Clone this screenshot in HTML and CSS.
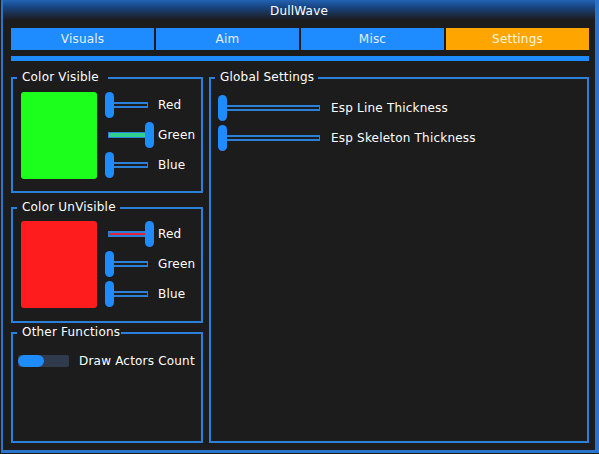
FILE: index.html
```html
<!DOCTYPE html>
<html>
<head>
<meta charset="utf-8">
<title>DullWave</title>
<link rel="stylesheet" href="styles.css">
</head>
<body>
<div class="window">
  <div class="titlebar">DullWave</div>
  <div class="content">
    <nav class="tabs">
      <div class="tab">Visuals</div>
      <div class="tab">Aim</div>
      <div class="tab">Misc</div>
      <div class="tab tab-active">Settings</div>
    </nav>
    <div class="separator"></div>
    <div class="main">
      <div class="col-left">
        <fieldset class="group group-visible">
          <legend class="lg-visible">Color Visible</legend>
          <div class="color-row">
            <div class="swatch swatch-green"></div>
            <div class="sliders">
              <div class="slider-row">
                <div class="slider"><div class="track"></div><div class="knob"></div></div>
                <span class="label">Red</span>
              </div>
              <div class="slider-row">
                <div class="slider"><div class="track track-green"></div><div class="knob knob-end"></div></div>
                <span class="label">Green</span>
              </div>
              <div class="slider-row">
                <div class="slider"><div class="track"></div><div class="knob"></div></div>
                <span class="label">Blue</span>
              </div>
            </div>
          </div>
        </fieldset>
        <fieldset class="group group-unvisible">
          <legend class="lg-unvisible">Color UnVisible</legend>
          <div class="color-row">
            <div class="swatch swatch-red"></div>
            <div class="sliders">
              <div class="slider-row">
                <div class="slider"><div class="track track-red"></div><div class="knob knob-end"></div></div>
                <span class="label">Red</span>
              </div>
              <div class="slider-row">
                <div class="slider"><div class="track"></div><div class="knob"></div></div>
                <span class="label">Green</span>
              </div>
              <div class="slider-row">
                <div class="slider"><div class="track"></div><div class="knob"></div></div>
                <span class="label">Blue</span>
              </div>
            </div>
          </div>
        </fieldset>
        <fieldset class="group group-other">
          <legend class="lg-other">Other Functions</legend>
          <div class="toggle-row">
            <div class="toggle"><div class="toggle-knob"></div></div>
            <span class="toggle-label">Draw Actors Count</span>
          </div>
        </fieldset>
      </div>
      <fieldset class="group group-global">
        <legend class="lg-global">Global Settings</legend>
        <div class="global-list">
          <div class="slider-row">
            <div class="slider slider-wide"><div class="track"></div><div class="knob"></div></div>
            <span class="label label-wide">Esp Line Thickness</span>
          </div>
          <div class="slider-row">
            <div class="slider slider-wide"><div class="track"></div><div class="knob"></div></div>
            <span class="label label-wide">Esp Skeleton Thickness</span>
          </div>
        </div>
      </fieldset>
    </div>
  </div>
</div>
</body>
</html>
```

FILE: styles.css
```css
html, body {
  margin: 0;
  padding: 0;
  background: #1c1c1c;
}

body {
  font-family: "DejaVu Sans", "Liberation Sans", sans-serif;
  font-size: 12px;
  letter-spacing: 0.2px;
  color: #ffffff;
}

.window {
  box-sizing: border-box;
  margin-left: 1px;
  width: 598px;
  height: 453px;
  border-left: 2px solid #2a74cc;
  border-right: 4px solid #2a74cc;
  border-bottom: 3px solid #2a74cc;
  background: #1c1c1c;
  display: flex;
  flex-direction: column;
}

.titlebar {
  height: 20px;
  line-height: 22px;
  text-align: center;
  color: #ffffff;
  background: linear-gradient(to bottom, #2163b3 0%, #184482 35%, #1c1c1c 100%);
}

.content {
  padding: 8px 6px 0 8px;
  display: flex;
  flex-direction: column;
}

.tabs {
  display: grid;
  grid-template-columns: repeat(4, 1fr);
  column-gap: 2px;
  height: 22px;
}

.tab {
  background: #1e8cff;
  color: #e6eef8;
  text-align: center;
  line-height: 22px;
}

.tab-active {
  background: #ffa500;
  color: #fff6e0;
}

.separator {
  margin-top: 6px;
  height: 5px;
  background: #1e8cff;
}

.main {
  margin-top: 10px;
  height: 372px;
  display: grid;
  grid-template-columns: 192px 380px;
  column-gap: 6px;
}

.col-left {
  display: flex;
  flex-direction: column;
}

.group {
  box-sizing: border-box;
  margin: 0;
  min-width: 0;
  border: 2px solid #2b80d9;
  padding: 0 0 0 4px;
}

.group legend {
  box-sizing: border-box;
  position: relative;
  top: -1px;
  padding: 0 0 0 5px;
  line-height: 14px;
  color: #ffffff;
  white-space: nowrap;
}

.lg-visible { width: 91px; }
.lg-unvisible { width: 103px; }
.lg-other { width: 104px; }
.lg-global { width: 103px; }

.group-visible {
  height: 122px;
  padding-top: 7px;
}

.group-unvisible {
  height: 122px;
  margin-top: 8px;
  padding-top: 6px;
}

.group-other {
  flex: 1;
  margin-top: 3px;
  padding-top: 14px;
}

.group-global {
  height: 372px;
  padding-top: 10px;
}

.color-row {
  display: flex;
  align-items: flex-start;
  gap: 8px;
  padding-left: 4px;
}

.swatch {
  width: 76px;
  height: 87px;
  border-radius: 3px;
}

.swatch-green { background: #1cff1c; }
.swatch-red { background: #ff1c1c; }

.sliders {
  display: flex;
  flex-direction: column;
  gap: 4px;
}

.slider-row {
  display: flex;
  align-items: center;
  height: 26px;
}

.slider {
  display: grid;
  width: 49px;
  height: 26px;
}

.slider-wide {
  width: 108px;
}

.track {
  grid-area: 1 / 1;
  align-self: center;
  box-sizing: border-box;
  height: 6px;
  margin: 0 6px 0 3px;
  border-top: 2px solid #2b80d9;
  border-bottom: 2px solid #2b80d9;
  border-right: 1px solid #2b80d9;
}

.track-green {
  border-width: 1px;
  border-style: solid;
  border-color: #2b80d9;
  background: #2fd08c;
}

.track-red {
  border-width: 2px 1px;
  border-style: solid;
  border-color: #2b80d9;
  background: #e0243c;
}

.knob {
  grid-area: 1 / 1;
  justify-self: start;
  width: 9px;
  height: 26px;
  border-radius: 4.5px;
  background: #1e8cff;
}

.knob-end {
  justify-self: end;
}

.label {
  margin-left: 4px;
}

.label-wide {
  margin-left: 5px;
}

.global-list {
  display: flex;
  flex-direction: column;
  gap: 4px;
  padding-left: 3px;
}

.toggle-row {
  display: flex;
  align-items: center;
  padding-left: 1px;
}

.toggle {
  width: 51px;
  height: 12px;
  border-radius: 2px;
  background: #2f3a4c;
  display: flex;
}

.toggle-knob {
  width: 26px;
  height: 12px;
  border-radius: 6px;
  background: #1e8cff;
}

.toggle-label {
  margin-left: 10px;
}
```
